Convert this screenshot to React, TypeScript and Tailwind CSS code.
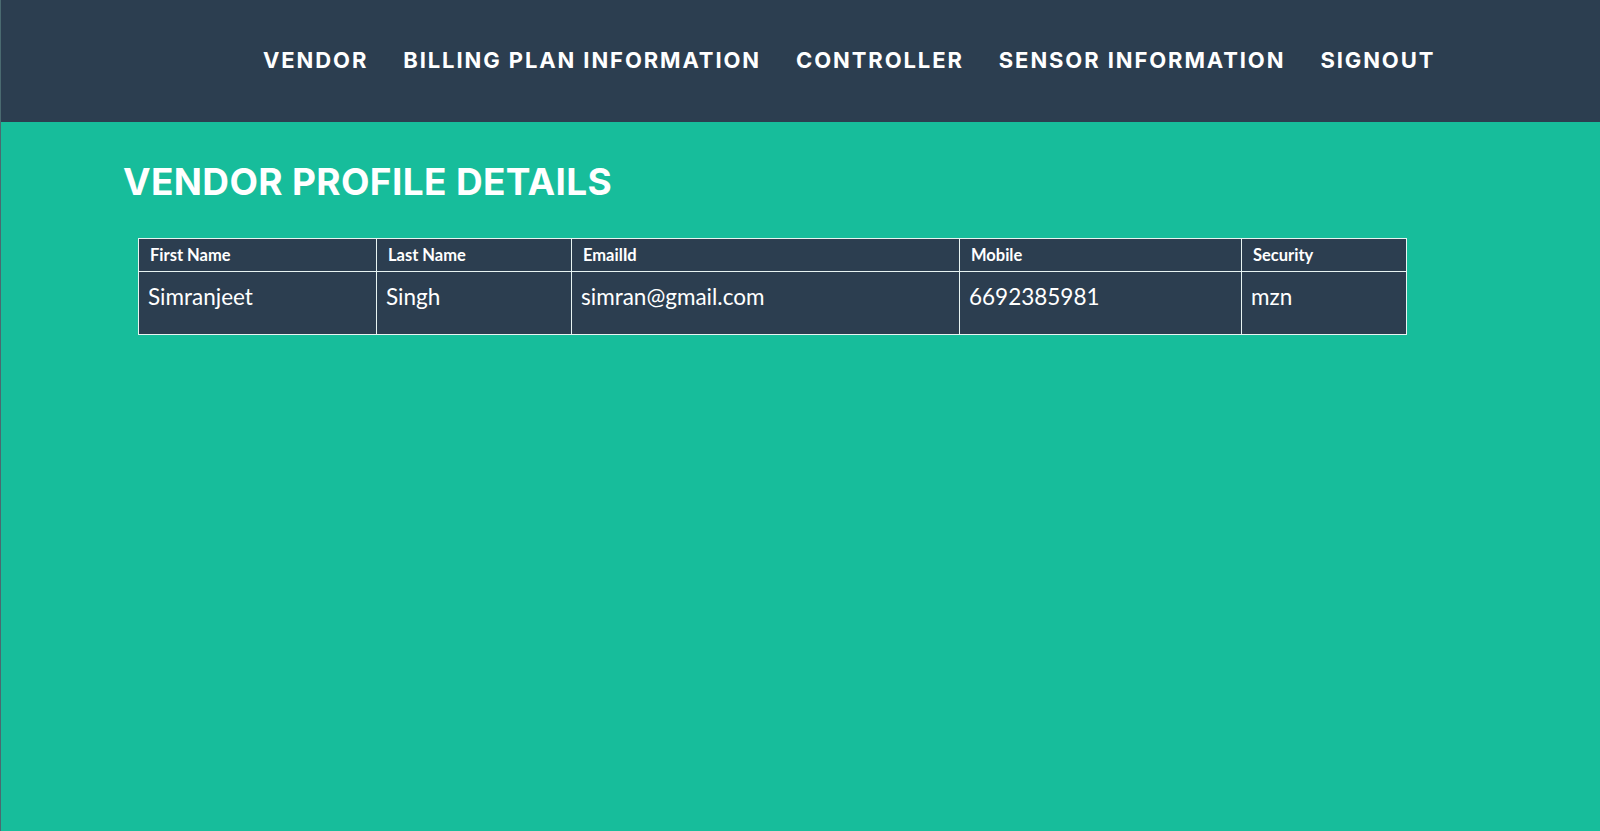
const navItems = ['VENDOR', 'BILLING PLAN INFORMATION', 'CONTROLLER', 'SENSOR INFORMATION', 'SIGNOUT'];

const columns = [
  { label: 'First Name', width: 'w-[238px]' },
  { label: 'Last Name', width: 'w-[195px]' },
  { label: 'EmailId', width: 'w-[388px]' },
  { label: 'Mobile', width: 'w-[282px]' },
  { label: 'Security', width: 'w-[165px]' },
];

const vendor = ['Simranjeet', 'Singh', 'simran@gmail.com', '6692385981', 'mzn'];

export default function App() {
  return (
    <div className="flex min-h-[831px] flex-col bg-[#17bd9b] border-l border-[#4a6a70]">
      <header className="flex h-[122px] items-center bg-[#2c3e50] pl-[262px]">
        <nav className="flex gap-[35px] pb-[2px]">
          {navItems.map((item) => (
            <a
              key={item}
              href="#"
              className="font-['Inter',sans-serif] text-[22px] font-bold tracking-[1.9px] text-white"
            >
              {item}
            </a>
          ))}
        </nav>
      </header>

      <main className="pl-[122px] pt-[36px]">
        <h1 className="font-['Inter',sans-serif] text-[37px] font-bold leading-[48px] tracking-[0.35px] text-white">
          VENDOR PROFILE DETAILS
        </h1>

        <table className="ml-[15px] mt-[32px] border-collapse font-['Lato',sans-serif] text-white">
          <thead>
            <tr>
              {columns.map((c) => (
                <th
                  key={c.label}
                  className={`${c.width} h-[33px] border border-[#e8f4f2] bg-[#2c3e50] px-[11px] text-left text-[16.5px] font-bold`}
                >
                  {c.label}
                </th>
              ))}
            </tr>
          </thead>
          <tbody>
            <tr>
              {vendor.map((v) => (
                <td
                  key={v}
                  className="h-[63px] border border-[#e8f4f2] bg-[#2c3e50] px-[9px] pb-[12px] text-[22.5px] align-middle"
                >
                  {v}
                </td>
              ))}
            </tr>
          </tbody>
        </table>
      </main>
    </div>
  );
}
